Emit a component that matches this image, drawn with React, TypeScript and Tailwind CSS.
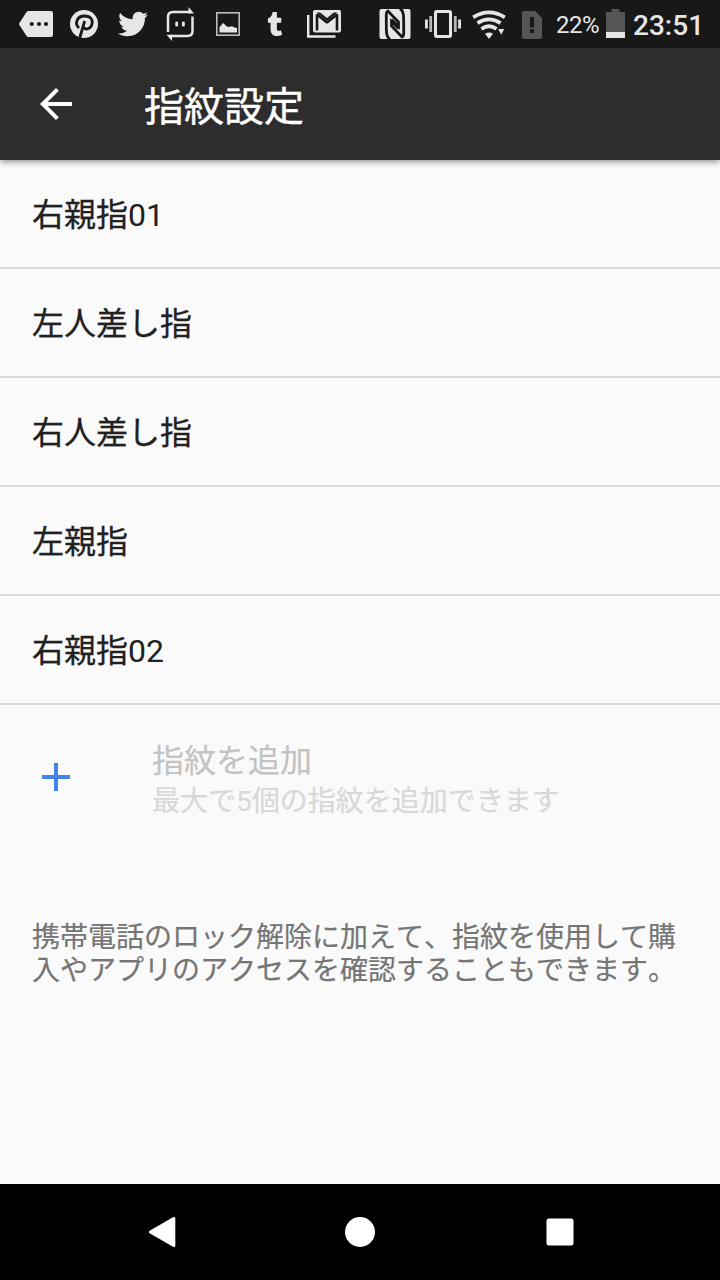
import type { ReactNode } from "react";
import { FaTumblr, FaTwitter } from "react-icons/fa";
import { MdAdd, MdArrowBack } from "react-icons/md";

const fingerprints = [
  { label: "右親指", index: "01" },
  { label: "左人差し指", index: "" },
  { label: "右人差し指", index: "" },
  { label: "左親指", index: "" },
  { label: "右親指", index: "02" },
];

const Glyph = ({ box, className, children }: { box: string; className: string; children: ReactNode }) => (
  <svg viewBox={box} className={`h-12 shrink-0 ${className}`} fill="#e6e6e6">
    {children}
  </svg>
);

function StatusBar() {
  return (
    <div className="flex h-12 shrink-0 items-center bg-[#181818] text-[#e6e6e6]">
      <Glyph box="19 0 34 48" className="ml-[19px] w-[34px]">
        <path d="M28.5 11H51q2 0 2 2v22q0 2-2 2H28.5q-1.2 0-1.9-1L19.4 25q-.5-1 0-2l7.2-11q.7-1 1.9-1Z" />
        <g fill="#181818">
          <circle cx="31.7" cy="24" r="2.1" />
          <circle cx="39" cy="24" r="2.1" />
          <circle cx="46" cy="24" r="2.1" />
        </g>
      </Glyph>
      <Glyph box="70 0 28 48" className="ml-[17px] w-[28px]">
        <circle cx="84" cy="24" r="14" />
        <path
          d="M79 28C74.500 24 76.500 16 84.500 16C91 16 93 20 92 24C91 28.500 86.500 30.500 83.500 27.500M84.700 21 79.700 38"
          fill="none"
          stroke="#181818"
          strokeWidth="2.800"
        />
      </Glyph>
      <FaTwitter className="ml-[20px] size-[30px] shrink-0" />
      <Glyph box="166 0 29 48" className="ml-[18px] w-[29px]">
        <path
          d="M168 32V17q0-5 5-5h17M192.500 16.500V31q0 5-5 5H170"
          fill="none"
          stroke="#e6e6e6"
          strokeWidth="2.500"
        />
        <path d="M188.500 7 194 13.500H188.500ZM172 41 166.500 34.700H172Z" />
        <rect x="175.300" y="21.500" width="2.800" height="5" rx="1.300" />
        <rect x="182" y="21.500" width="2.800" height="5" rx="1.300" />
      </Glyph>
      <Glyph box="216 0 24 48" className="ml-[21px] w-[24px]">
        <rect x="216.800" y="12.800" width="22.400" height="22.400" fill="none" stroke="#bdbdbd" strokeWidth="1.600" />
        <path d="M219.500 32.500V27l3.700-4 3 3 2.300 1 3.500-.8 2.500 1.200 2.500.6v4.500Z" />
      </Glyph>
      <FaTumblr className="ml-[27px] h-[24px] w-[16px] shrink-0" />
      <Glyph box="307 0 34 48" className="ml-[24px] w-[34px]">
        <path d="M308.200 15v21.600h27.300" fill="none" stroke="#e6e6e6" strokeWidth="2.500" />
        <rect x="313" y="10" width="28" height="22.500" rx="2" />
        <path
          d="M317 30.500V14.500L327 22.500 337 14.500V30.500"
          fill="none"
          stroke="#181818"
          strokeWidth="2.600"
          strokeLinejoin="bevel"
        />
        <path d="M316.500 12.500h3.500L327 18l7-5.500h3.500L327 21Z" fill="#181818" />
      </Glyph>
      <Glyph box="379 0 32 48" className="ml-[38px] w-[32px]">
        <rect x="379.500" y="9" width="31" height="30" rx="2" />
        <g fill="none" stroke="#181818" strokeWidth="2.800" strokeLinejoin="miter">
          <path d="M390 39.500C386.500 37 386.300 34 386.300 24V15Q386.300 11.500 388 11L398.500 22V26.500L391.500 19.500" />
          <path d="M400 8.500C403.500 11 403.700 14 403.700 24V33Q403.700 36.500 402 37L391.500 26V21.500L398.500 28.500" />
        </g>
      </Glyph>
      <Glyph box="425 0 36 48" className="ml-[14px] w-[36px]">
        <rect x="435.500" y="11.500" width="15" height="25" rx="1.200" fill="none" stroke="#e6e6e6" strokeWidth="3" />
        <path d="M425 19.500h2.800v9H425ZM458.200 19.500h2.800v9h-2.800Z" />
        <path d="M429.300 16h2.800v16h-2.800ZM453.900 16h2.800v16h-2.800Z" fill="#b8b8b8" />
      </Glyph>
      <Glyph box="472 0 34 48" className="ml-[11px] w-[34px]">
        <g fill="none" stroke="#e6e6e6" strokeWidth="3.800">
          <path d="M473.200 17.300Q489 7.500 504.800 17.300" />
          <path d="M477.500 23.200Q489 15.500 500.500 23.200" />
          <path d="M481.500 29Q489 23.500 496.500 29" />
        </g>
        <path d="M485 33.800Q489 31 493 33.800L489 39ZM498.200 29h6l-3 5.800Z" />
      </Glyph>
      <Glyph box="522 0 20 48" className="ml-[16px] w-[20px]">
        <path d="M524 11h11l7 7v19q0 2-2 2h-16q-2 0-2-2V13q0-2 2-2Z" fill="#555" />
        <path d="M530 17h4v10.500h-4ZM530 29.300h4v3.700h-4Z" fill="#181818" />
      </Glyph>
      <span className="ml-[14px] w-[50px] pt-[2px] font-['Roboto',sans-serif] text-[24px] leading-[46px] tracking-[-0.5px] whitespace-nowrap">
        22%
      </span>
      <Glyph box="606 0 19 48" className="w-[19px]">
        <path d="M606 12h5.500V9h8v3h5.500v20h-19Z" fill="#555" />
        <path d="M606 32h19v6h-19Z" />
      </Glyph>
      <span className="ml-[8px] pt-[4px] font-['Roboto',sans-serif] text-[28px] leading-[44px] font-medium">23:51</span>
    </div>
  );
}

export default function App() {
  return (
    <div className="flex h-[1280px] w-[720px] flex-col overflow-hidden bg-[#fafafa] font-['Roboto','Noto_Sans_CJK_JP',sans-serif] [font-kerning:none] [text-spacing-trim:space-all]">
      <StatusBar />
      <header className="z-10 flex h-28 shrink-0 items-center bg-[#2d2d2d] pl-8 text-white shadow-[0_2px_6px_rgba(0,0,0,0.4)]">
        <MdArrowBack className="size-12" />
        <h1 className="ml-16 pt-[8px] text-[40px] leading-none font-normal [-webkit-text-stroke:0.4px_white]">指紋設定</h1>
      </header>
      <main className="flex-1 text-[#212121]">
        <ul>
          {fingerprints.map(({ label, index }) => (
            <li
              key={label + index}
              className="flex h-[109px] items-center border-b-2 border-[#dadada] pl-8 text-[32px] leading-none"
            >
              <span className="pt-[3px] [-webkit-text-stroke:0.3px_#212121]">{label}</span>
              <span className="pt-[3px]">{index}</span>
            </li>
          ))}
        </ul>
        <div className="flex h-[144px] items-center pl-8">
          <MdAdd className="size-12 text-[#4285e8]" />
          <div className="ml-[72px] pt-[8px]">
            <p className="text-[32px] leading-[41px] text-[#c3c3c3] [-webkit-text-stroke:0.2px_#c3c3c3]">指紋を追加</p>
            <p className="text-[28px] leading-[40px] text-[#d8d8d8] [-webkit-text-stroke:0.2px_#d8d8d8]">
              最大で5個の指紋を追加できます
            </p>
          </div>
        </div>
        <p className="mt-[72px] pl-8 text-[28px] leading-[33px] whitespace-nowrap text-[#757575] [-webkit-text-stroke:0.2px_#757575]">
          携帯電話のロック解除に加えて、指紋を使用して購
          <br />
          入やアプリのアクセスを確認することもできます。
        </p>
      </main>
      <nav className="flex h-24 shrink-0 items-center justify-center gap-[152px] bg-black">
        <svg viewBox="0 0 48 48" className="size-12" fill="#fff">
          <path d="M14 22.500 37 9.300q2.300-1 2.300 1.200v27q0 2.200-2.300 1.200L14 25.500q-2.300-1.500 0-3Z" />
        </svg>
        <svg viewBox="0 0 48 48" className="size-12" fill="#fff">
          <circle cx="24" cy="24" r="15" />
        </svg>
        <svg viewBox="0 0 48 48" className="size-12" fill="#fff">
          <rect x="10.500" y="10.500" width="27" height="27" rx="2.500" />
        </svg>
      </nav>
    </div>
  );
}
